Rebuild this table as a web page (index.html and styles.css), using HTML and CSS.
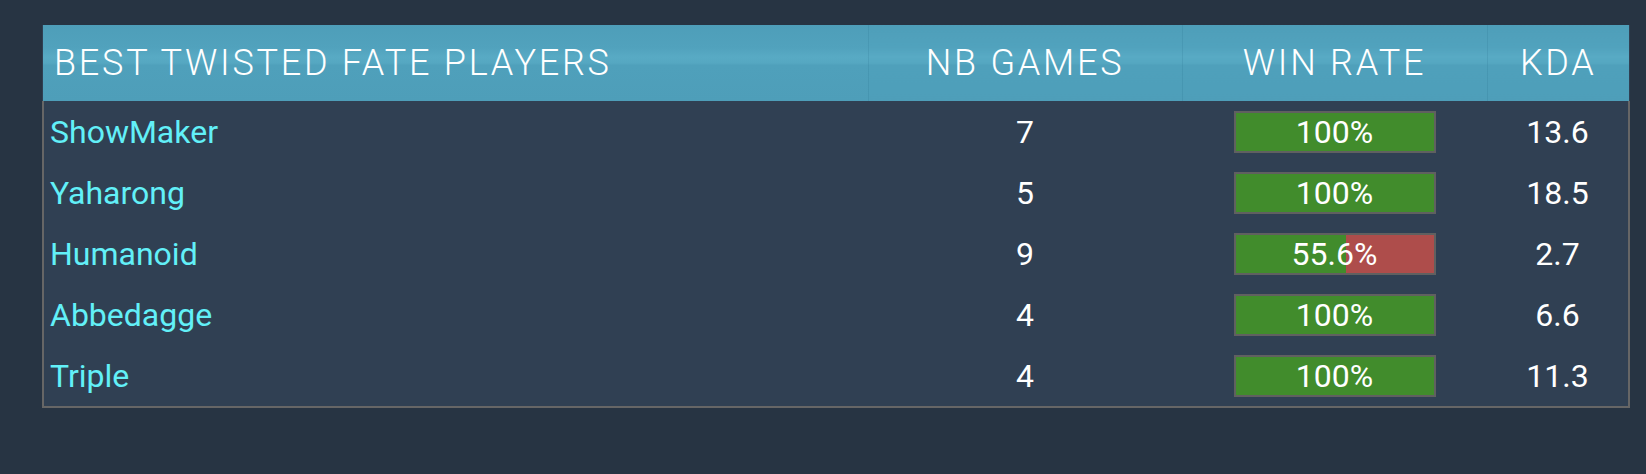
FILE: index.html
```html
<!DOCTYPE html>
<html>
<head>
<meta charset="utf-8">
<link rel="stylesheet" href="styles.css">
</head>
<body>
<div class="page">
  <table class="players">
    <colgroup>
      <col class="c-name"><col class="c-games"><col class="c-rate"><col class="c-kda">
    </colgroup>
    <thead>
      <tr>
        <th class="th-name">Best Twisted Fate Players</th>
        <th>NB Games</th>
        <th>Win Rate</th>
        <th>KDA</th>
      </tr>
    </thead>
    <tbody>
      <tr>
        <td class="name">ShowMaker</td>
        <td class="num">7</td>
        <td class="rate"><div class="bar"><div class="win" style="width:100%"></div><span class="pct">100%</span></div></td>
        <td class="num">13.6</td>
      </tr>
      <tr>
        <td class="name">Yaharong</td>
        <td class="num">5</td>
        <td class="rate"><div class="bar"><div class="win" style="width:100%"></div><span class="pct">100%</span></div></td>
        <td class="num">18.5</td>
      </tr>
      <tr>
        <td class="name">Humanoid</td>
        <td class="num">9</td>
        <td class="rate"><div class="bar"><div class="win" style="width:55.6%"></div><span class="pct">55.6%</span></div></td>
        <td class="num">2.7</td>
      </tr>
      <tr>
        <td class="name">Abbedagge</td>
        <td class="num">4</td>
        <td class="rate"><div class="bar"><div class="win" style="width:100%"></div><span class="pct">100%</span></div></td>
        <td class="num">6.6</td>
      </tr>
      <tr>
        <td class="name">Triple</td>
        <td class="num">4</td>
        <td class="rate"><div class="bar"><div class="win" style="width:100%"></div><span class="pct">100%</span></div></td>
        <td class="num">11.3</td>
      </tr>
    </tbody>
  </table>
</div>
</body>
</html>
```

FILE: styles.css
```css
html, body {
  margin: 0;
  padding: 0;
  background: #273443;
  font-family: Roboto, "Liberation Sans", sans-serif;
}

.page {
  padding: 25px 0 0 42px;
  height: 474px;
  box-sizing: border-box;
}

.players {
  width: 1586px;
  table-layout: fixed;
  border-collapse: collapse;
  background: #304053;
}

.c-name { width: 825px; }
.c-games { width: 314px; }
.c-rate { width: 305px; }
.c-kda { width: 142px; }

.players thead th {
  height: 76px;
  padding: 0;
  background: linear-gradient(to bottom, #4e9eb9 0%, #51a2bd 30%, #58aac4 42%, #55a7c1 50%, #4fa0bb 53%, #4e9eb9 100%);
  color: #ffffff;
  font-weight: 300;
  font-size: 36px;
  letter-spacing: 2.75px;
  text-transform: uppercase;
  text-align: center;
  border-left: 1px solid rgba(40, 110, 140, 0.18);
}

.players thead th.th-name {
  text-align: left;
  padding-left: 11px;
  border-left: none;
}

.players tbody {
  border: 2px solid #666666;
  border-top: none;
}

.players tbody td {
  height: 61px;
  padding: 0;
  font-size: 32px;
  color: #ffffff;
  text-align: center;
}

.players tbody td.name {
  text-align: left;
  padding-left: 6px;
  color: #62f0f8;
}

.rate {
  vertical-align: middle;
}

.bar {
  display: grid;
  width: 198px;
  height: 38px;
  margin: 0 auto;
  border: 2px solid #606060;
  background: #ae4d4b;
}

.win {
  grid-area: 1 / 1;
  height: 100%;
  background: #418c2c;
}

.pct {
  grid-area: 1 / 1;
  align-self: center;
  justify-self: center;
  line-height: 1;
  color: #ffffff;
  font-size: 32px;
}
```
